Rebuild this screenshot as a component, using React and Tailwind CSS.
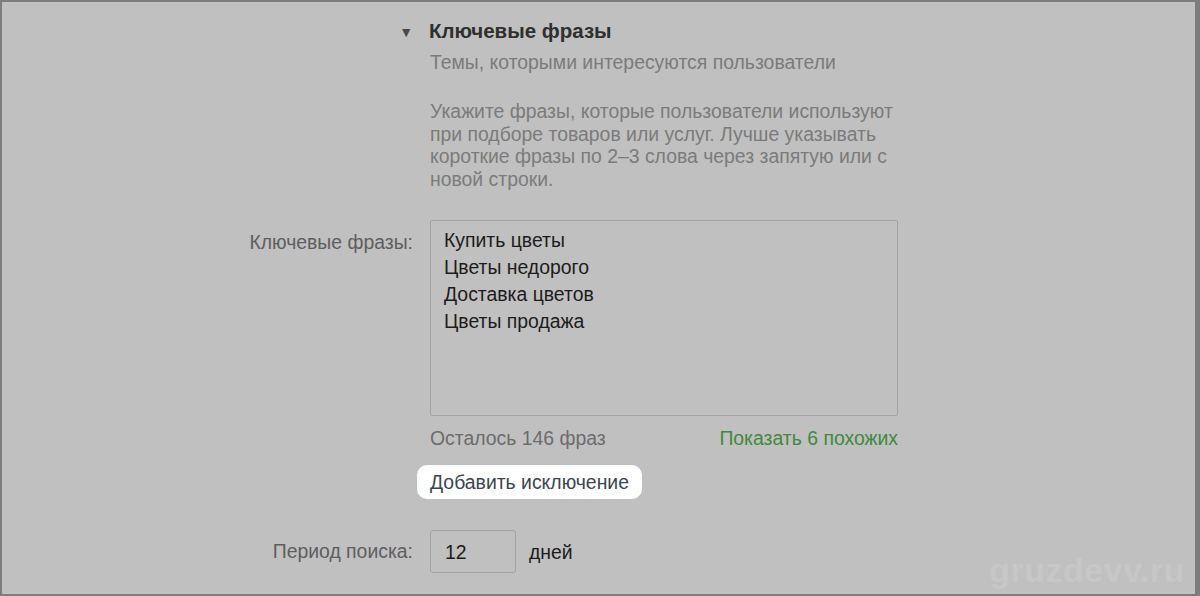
const phrases = ['Купить цветы', 'Цветы недорого', 'Доставка цветов', 'Цветы продажа'];

function FieldRow({ label, children, className = '' }) {
  return (
    <div className={`flex ${className}`}>
      <div className="w-[428px] shrink-0 pr-[17px] text-right text-[#5e5e5e]">{label}</div>
      <div className="flex-1">{children}</div>
    </div>
  );
}

export default function App() {
  return (
    <div
      className="relative h-[596px] w-[1200px] overflow-hidden border-t-2 border-l-2 border-b-2 border-r-[5px] border-[#7d7d7d] bg-[#c0c0c0] text-[19.4px] leading-[22px]"
      style={{ fontFamily: '"Liberation Sans", Arial, sans-serif' }}
    >
      <div className="pt-[17px]">
        {/* section header */}
        <div className="flex items-center">
          <div className="w-[428px] shrink-0 pr-[17px] text-right">
            <span className="text-[14px] text-[#4a4a4a]">▼</span>
          </div>
          <h2 className="ml-[-1px] text-[20.5px] font-bold leading-[24px] text-[#2f2f2f]">Ключевые фразы</h2>
        </div>

        <FieldRow label="" className="mt-[8px]">
          <p className="text-[#7b7b7b]">Темы, которыми интересуются пользователи</p>
          <p className="mt-[27px] leading-[22.5px] text-[#7b7b7b]">
            Укажите фразы, которые пользователи используют
            <br />
            при подборе товаров или услуг. Лучше указывать
            <br />
            короткие фразы по 2–3 слова через запятую или с
            <br />
            новой строки.
          </p>
        </FieldRow>

        <FieldRow label={<span className="block pt-[11px]">Ключевые фразы:</span>} className="mt-[30px]">
          <div className="h-[196px] w-[468px] rounded-[2px] border border-[#a3a3a3] px-[13px] pt-[6px] leading-[27px] text-[#1c1c1c]">
            {phrases.map(p => (
              <div key={p}>{p}</div>
            ))}
          </div>
          <div className="mt-[11px] flex w-[468px] justify-between">
            <span className="text-[#6c6c6c]">Осталось 146 фраз</span>
            <span className="text-[#3f8a3c]">Показать 6 похожих</span>
          </div>
          <div className="mt-[16px]">
            <span className="ml-[-13px] inline-block rounded-[10px] bg-white px-[13px] py-[6px] text-[#3a4550]">
              Добавить исключение
            </span>
          </div>
        </FieldRow>

        <FieldRow label={<span className="block pt-[10px]">Период поиска:</span>} className="mt-[31px]">
          <div className="flex items-center">
            <div className="h-[43px] w-[86px] rounded-[3px] border border-[#a3a3a3] px-[14px] pt-[10px] text-[#1c1c1c]">12</div>
            <span className="ml-[13px] text-[#1c1c1c]">дней</span>
          </div>
        </FieldRow>
      </div>

      <div className="absolute bottom-[13px] right-[10px] text-[34px] font-bold tracking-[0.5px] text-[#c7c7c7]">gruzdevv.ru</div>
    </div>
  );
}
